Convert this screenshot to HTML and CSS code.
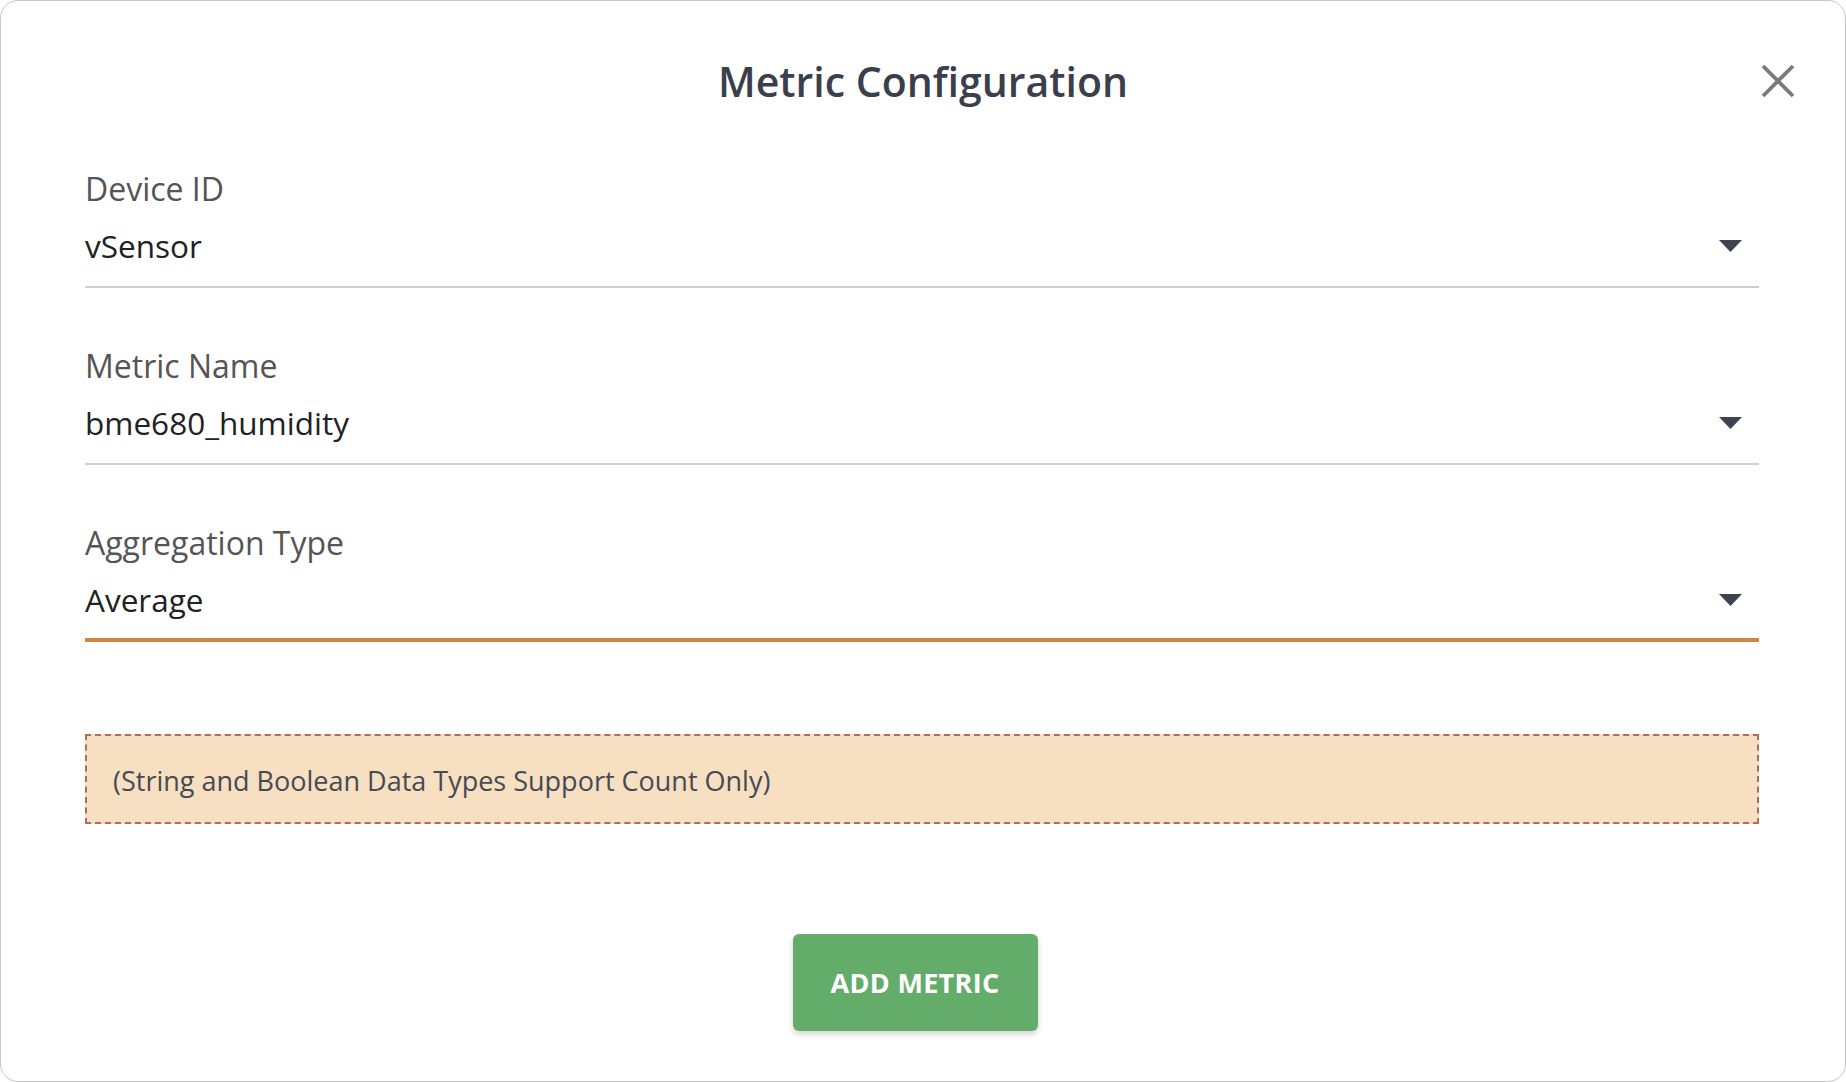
FILE: index.html
```html
<!DOCTYPE html>
<html lang="en">

<head>
    <meta charset="UTF-8">
    <meta name="viewport" content="width=device-width, initial-scale=1.0">
    <title>Metric Configuration</title>
    <link rel="stylesheet" href="styles.css">
</head>

<body>
    <div class="modal">
        <!-- cabecera -->
        <div class="modal-header">
            <span></span>
            <h2 class="modal-title">Metric Configuration</h2>
            <button class="close" aria-label="Close">
                <svg width="34" height="34" viewBox="0 0 34 34">
                    <line x1="2" y1="2" x2="32" y2="32" />
                    <line x1="32" y1="2" x2="2" y2="32" />
                </svg>
            </button>
        </div>

        <!-- formulario -->
        <form class="form">
            <div class="field">
                <label>Device ID</label>
                <div class="select">
                    <span class="value">vSensor</span>
                    <svg class="arrow" width="23" height="12" viewBox="0 0 23 12">
                        <polygon points="0,0 23,0 11.5,12" />
                    </svg>
                </div>
            </div>
            <div class="field">
                <label>Metric Name</label>
                <div class="select">
                    <span class="value">bme680_humidity</span>
                    <svg class="arrow" width="23" height="12" viewBox="0 0 23 12">
                        <polygon points="0,0 23,0 11.5,12" />
                    </svg>
                </div>
            </div>
            <div class="field focused">
                <label>Aggregation Type</label>
                <div class="select">
                    <span class="value">Average</span>
                    <svg class="arrow" width="23" height="12" viewBox="0 0 23 12">
                        <polygon points="0,0 23,0 11.5,12" />
                    </svg>
                </div>
            </div>

            <div class="notice">(String and Boolean Data Types Support Count Only)</div>

            <div class="actions">
                <button type="button" class="btn-add">ADD METRIC</button>
            </div>
        </form>
    </div>
</body>

</html>
```

FILE: styles.css
```css
/*Reset*/
* {
    margin: 0;
    padding: 0;
    box-sizing: border-box;
}

html,
body {
    height: 100%;
    background-color: #ffffff;
    font-family: 'Open Sans', 'Liberation Sans', sans-serif;
}

/* Tarjeta del modal */
.modal {
    height: 100vh;
    width: 100%;
    border: 1.5px solid #c6c6c6;
    border-radius: 18px;
    background-color: #ffffff;
}

/* Cabecera */
.modal-header {
    display: grid;
    grid-template-columns: 1fr auto 1fr;
    align-items: center;
    padding: 56px 50px 0 50px;
}

.modal-title {
    font-size: 41px;
    line-height: 48px;
    font-weight: 600;
    color: #3b3f4c;
}

.close {
    justify-self: end;
    display: flex;
    background: none;
    border: none;
    cursor: pointer;
}

.close line {
    stroke: #7a7a7a;
    stroke-width: 3.8;
}

/* Formulario */
.form {
    padding: 64px 86px 0 84px;
}

.field {
    margin-bottom: 58px;
}

.field label {
    display: block;
    font-size: 32px;
    line-height: 40px;
    color: #555555;
    margin-bottom: 17px;
}

.select {
    display: flex;
    align-items: center;
    justify-content: space-between;
    padding-bottom: 20px;
    border-bottom: 2px solid #cfcfcf;
}

.value {
    font-size: 31.5px;
    line-height: 40px;
    color: #222222;
}

.arrow {
    margin-right: 17px;
    fill: #3d4350;
}

/* campo activo */
.field.focused .select {
    padding-bottom: 18px;
    border-bottom: 4px solid #cf8743;
}

/* Aviso */
.notice {
    margin-top: 92px;
    padding: 28px 26px 24px 26px;
    background-color: #f7dfc1;
    border: 2px dashed #b06b62;
    font-size: 27px;
    line-height: 34px;
    color: #464a55;
}

/* Botón */
.actions {
    display: flex;
    justify-content: center;
    padding-top: 110px;
}

.btn-add {
    width: 245px;
    height: 97px;
    margin-right: 14px;
    background-color: #64ac6a;
    color: #ffffff;
    border: none;
    border-radius: 6px;
    font-family: 'Open Sans', 'Liberation Sans', sans-serif;
    font-size: 27px;
    font-weight: 700;
    letter-spacing: 0.3px;
    box-shadow: 0 3px 6px rgba(0, 0, 0, 0.18);
    cursor: pointer;
}
```
